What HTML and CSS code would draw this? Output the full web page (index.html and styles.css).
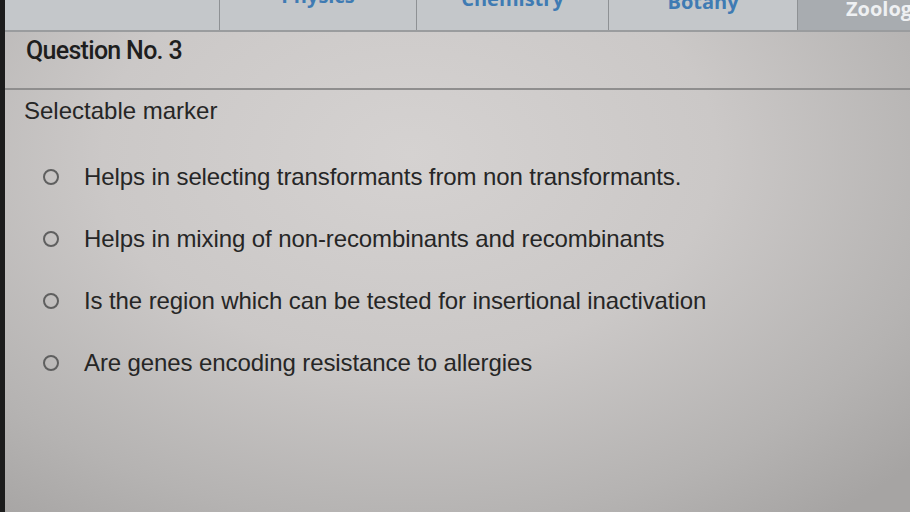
FILE: index.html
```html
<!DOCTYPE html>
<html>
<head>
<meta charset="utf-8">
<link rel="stylesheet" href="styles.css">
</head>
<body>
<div class="screen">
  <div class="edge"></div>
  <div class="page">
    <div class="tabs">
      <div class="tab w1"><span></span></div>
      <div class="tab w2"><span>Physics</span></div>
      <div class="tab w3"><span>Chemistry</span></div>
      <div class="tab w4"><span>Botany</span></div>
      <div class="tab w5 active"><span>Zoology</span></div>
    </div>
    <div class="qhead">Question No. 3</div>
    <div class="qbody">
      <div class="qtext">Selectable marker</div>
      <div class="options">
        <label class="opt"><span class="radio"></span><span class="otext">Helps in selecting transformants from non transformants.</span></label>
        <label class="opt"><span class="radio"></span><span class="otext">Helps in mixing of non-recombinants and recombinants</span></label>
        <label class="opt"><span class="radio"></span><span class="otext">Is the region which can be tested for insertional inactivation</span></label>
        <label class="opt"><span class="radio"></span><span class="otext">Are genes encoding resistance to allergies</span></label>
      </div>
    </div>
  </div>
</div>
</body>
</html>
```

FILE: styles.css
```css
html, body {
  margin: 0;
  padding: 0;
  width: 910px;
  height: 512px;
  overflow: hidden;
}
.screen {
  display: flex;
  width: 910px;
  height: 512px;
  background: radial-gradient(ellipse 75% 90% at 45% 30%, #d5d2d1 0%, #cbc8c7 45%, #b5b3b2 80%, #a6a4a3 100%);
  font-family: "Liberation Sans", Arial, sans-serif;
  color: #262626;
}
.edge {
  width: 5px;
  flex: none;
  background: #1c1c1c;
}
.page {
  flex: 1;
  display: flex;
  flex-direction: column;
}
.tabs {
  display: flex;
  height: 30px;
  border-bottom: 2px solid #9a9c9e;
  overflow: hidden;
}
.tab {
  background: #c4c7ca;
  border-right: 1px solid #8e9194;
  display: flex;
  justify-content: center;
  align-items: flex-start;
  overflow: hidden;
}
.tab span {
  font-family: "Open Sans", sans-serif;
  font-weight: 700;
  font-size: 20px;
  line-height: 20px;
  color: #3f7bb3;
  margin-top: -9px;
}
.w1 { width: 214px; }
.w2 { width: 196px; }
.w3 { width: 191px; }
.w4 { width: 188px; }
.w5 { flex: 1; border-right: none; }
.w2 span { margin-top: -14px; }
.w3 span { margin-top: -11px; }
.w4 span { margin-top: -8px; }
.tab.active {
  background: #a8acb0;
  justify-content: flex-start;
  padding-left: 48px;
}
.tab.active span {
  color: #eef0f2;
  margin-top: -1px;
}
.qhead {
  font-family: Roboto, sans-serif;
  font-weight: 500;
  font-size: 25px;
  letter-spacing: -0.7px;
  color: #1e1e1e;
  padding: 4px 0 0 21px;
  height: 52px;
  border-bottom: 2px solid #8f8e8e;
}
.qbody {
  padding: 7px 0 0 19px;
}
.qtext {
  font-size: 24px;
  line-height: 28px;
  margin-bottom: 38px;
}
.options {
  display: flex;
  flex-direction: column;
  gap: 34px;
}
.opt {
  display: flex;
  align-items: center;
  gap: 25px;
  padding-left: 19px;
}
.radio {
  width: 12px;
  height: 12px;
  border: 2px solid #5f5f5f;
  border-radius: 50%;
  flex: none;
}
.otext {
  font-size: 24px;
  line-height: 28px;
  letter-spacing: -0.1px;
}
```
